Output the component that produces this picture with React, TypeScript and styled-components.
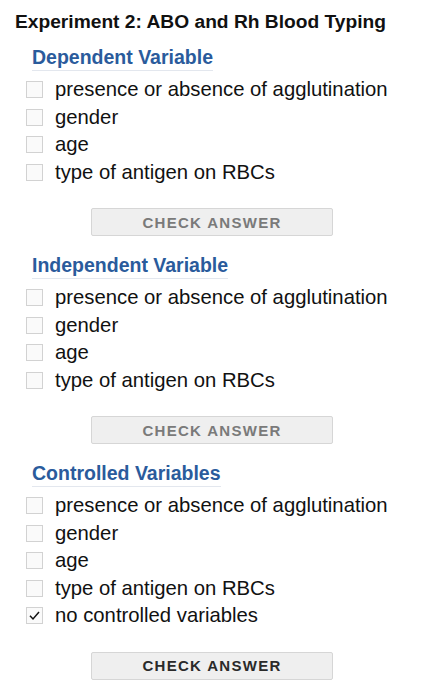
import React from "react";
import styled, { createGlobalStyle } from "styled-components";

const Global = createGlobalStyle`
  html, body { margin: 0; padding: 0; background: #fff; }
  body { font-family: "Liberation Sans", Arial, Helvetica, sans-serif; color: #111; }
`;

const Page = styled.div`
  padding: 10px 0 0 15px;
  width: 407px;
`;

const Title = styled.h1`
  margin: 0;
  font-size: 19.2px;
  line-height: 23px;
  font-weight: 700;
  color: #111;
`;

const Section = styled.section`
  padding-left: 12px;
  display: flex;
  flex-direction: column;
`;

const Heading = styled.h2<{ $first?: boolean }>`
  align-self: flex-start;
  margin: ${(p) => (p.$first ? "13px" : "18px")} 0 0 5px;
  font-size: 19.5px;
  line-height: 22px;
  font-weight: 700;
  color: #2a5b9c;
  border-bottom: 1px solid #e3e7ee;
  padding-bottom: 2px;
`;

const List = styled.ul`
  list-style: none;
  margin: 5px 0 0 0;
  padding: 0;
`;

const Item = styled.li`
  display: flex;
  align-items: center;
  height: 27.5px;
  font-size: 20.3px;
  color: #111;
`;

const Box = styled.span`
  width: 15px;
  height: 15px;
  border: 1px solid #d2d2d2;
  background: #fafafa;
  margin-right: 12px;
  margin-left: -1px;
  display: flex;
  align-items: center;
  justify-content: center;
  flex-shrink: 0;
`;

const Button = styled.button<{ $active?: boolean }>`
  align-self: flex-start;
  margin: 22px 0 0 64px;
  width: 242px;
  height: 28px;
  background: #efefef;
  border: 1px solid #d6d6d6;
  border-radius: 2px;
  font-family: "Liberation Sans", Arial, sans-serif;
  font-weight: 700;
  font-size: 15px;
  letter-spacing: 1.3px;
  color: ${(p) => (p.$active ? "#2a2a2a" : "#7a7a7a")};
  padding: 0;
`;

const options = [
  "presence or absence of agglutination",
  "gender",
  "age",
  "type of antigen on RBCs",
];

const Check = () => (
  <svg width="13" height="13" viewBox="0 0 13 13">
    <path d="M2 6.8 L5 10 L11 3" fill="none" stroke="#111" strokeWidth="1.5" />
  </svg>
);

type Opt = { label: string; checked?: boolean };

const Block = ({
  title,
  items,
  active,
  first,
}: {
  title: string;
  items: Opt[];
  active?: boolean;
  first?: boolean;
}) => (
  <Section>
    <Heading $first={first}>{title}</Heading>
    <List>
      {items.map((it) => (
        <Item key={it.label}>
          <Box>{it.checked && <Check />}</Box>
          {it.label}
        </Item>
      ))}
    </List>
    <Button $active={active}>CHECK ANSWER</Button>
  </Section>
);

export default function App() {
  const base = options.map((l) => ({ label: l }));
  return (
    <>
      <Global />
      <Page>
        <Title>Experiment 2: ABO and Rh Blood Typing</Title>
        <Block title="Dependent Variable" items={base} first />
        <Block title="Independent Variable" items={base} />
        <Block
          title="Controlled Variables"
          items={[...base, { label: "no controlled variables", checked: true }]}
          active
        />
      </Page>
    </>
  );
}
